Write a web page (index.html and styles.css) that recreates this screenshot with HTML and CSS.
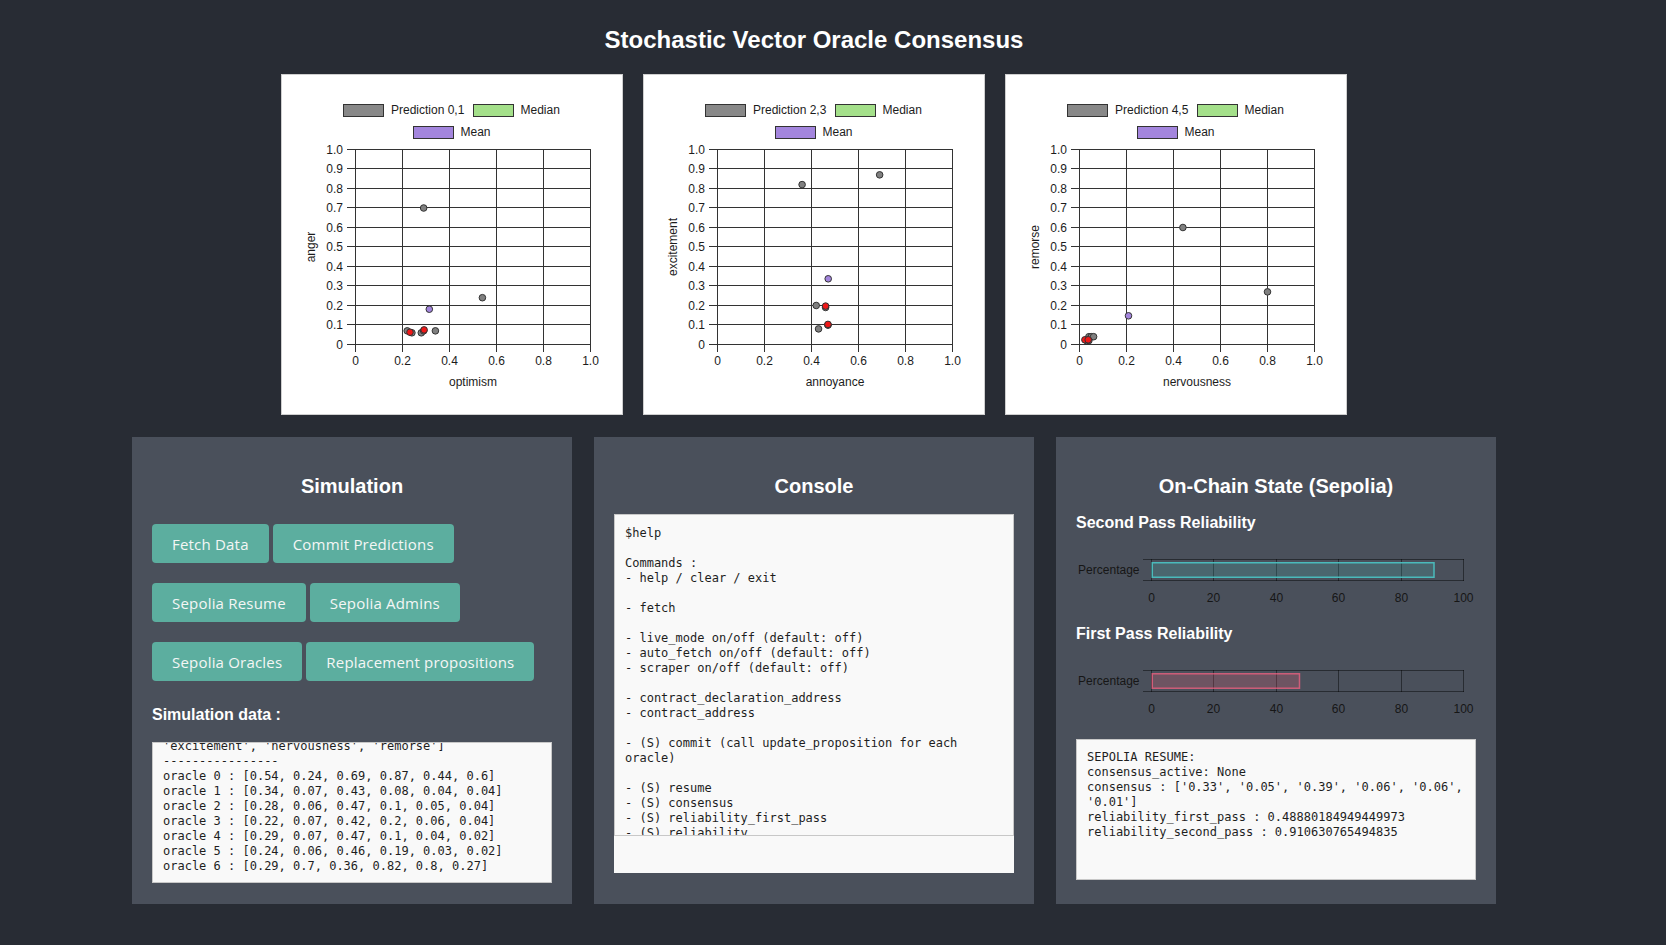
FILE: index.html
```html
<!DOCTYPE html>
<html lang="en">
<head>
<meta charset="utf-8">
<title>Stochastic Vector Oracle Consensus</title>
<link rel="stylesheet" href="styles.css">
</head>
<body>
<div class="app">
  <h1 class="title">Stochastic Vector Oracle Consensus</h1>

  <div class="charts">
    <div class="chart-card">
      <svg class="scatter" width="340" height="339" viewBox="1 1 340 339">
        <rect class="sw sw-pred" x="62.5" y="30.5" width="40" height="12"/>
        <text x="110" y="40">Prediction 0,1</text>
        <rect class="sw sw-med" x="192.5" y="30.5" width="40" height="12"/>
        <text x="239.5" y="40">Median</text>
        <rect class="sw sw-mean" x="132.5" y="52.5" width="40" height="12"/>
        <text x="179.5" y="62">Mean</text>
        <path class="grid" d="M66 75.5H310M66 94.5H310M66 114.5H310M66 133.5H310M66 153.5H310M66 172.5H310M66 192.5H310M66 211.5H310M66 231.5H310M66 250.5H310M66 270.5H310M74.5 75V278M121.5 75V278M168.5 75V278M215.5 75V278M262.5 75V278M309.5 75V278"/>
        <g class="yt">
          <text x="62" y="274.5">0</text><text x="62" y="254.5">0.1</text><text x="62" y="235.5">0.2</text><text x="62" y="215.5">0.3</text><text x="62" y="196.5">0.4</text><text x="62" y="176.5">0.5</text><text x="62" y="157.5">0.6</text><text x="62" y="137.5">0.7</text><text x="62" y="118.5">0.8</text><text x="62" y="98.5">0.9</text><text x="62" y="79.5">1.0</text>
        </g>
        <g class="xt">
          <text x="74.5" y="291">0</text><text x="121.5" y="291">0.2</text><text x="168.5" y="291">0.4</text><text x="215.5" y="291">0.6</text><text x="262.5" y="291">0.8</text><text x="309.5" y="291">1.0</text>
        </g>
        <text class="axis-title" x="192" y="312">optimism</text>
        <text class="axis-title" transform="rotate(-90)" x="-173" y="33.5">anger</text>
        <g class="pts">
          <circle class="p" cx="201.4" cy="223.7" r="3.3"/><circle class="p" cx="154.4" cy="256.85" r="3.3"/><circle class="p" cx="140.3" cy="258.8" r="3.3"/><circle class="p" cx="126.2" cy="256.85" r="3.3"/><circle class="p" cx="142.65" cy="256.85" r="3.3"/><circle class="p" cx="130.9" cy="258.8" r="3.3"/><circle class="p" cx="142.65" cy="134" r="3.3"/>
          <circle class="m" cx="129" cy="258.2" r="3.3"/><circle class="m" cx="143.1" cy="255.9" r="3.3"/>
          <circle class="a" cx="148.3" cy="235.2" r="3.3"/>
        </g>
      </svg>
    </div>

    <div class="chart-card">
      <svg class="scatter" width="340" height="339" viewBox="1 1 340 339">
        <rect class="sw sw-pred" x="62.5" y="30.5" width="40" height="12"/>
        <text x="110" y="40">Prediction 2,3</text>
        <rect class="sw sw-med" x="192.5" y="30.5" width="40" height="12"/>
        <text x="239.5" y="40">Median</text>
        <rect class="sw sw-mean" x="132.5" y="52.5" width="40" height="12"/>
        <text x="179.5" y="62">Mean</text>
        <path class="grid" d="M66 75.5H310M66 94.5H310M66 114.5H310M66 133.5H310M66 153.5H310M66 172.5H310M66 192.5H310M66 211.5H310M66 231.5H310M66 250.5H310M66 270.5H310M74.5 75V278M121.5 75V278M168.5 75V278M215.5 75V278M262.5 75V278M309.5 75V278"/>
        <g class="yt">
          <text x="62" y="274.5">0</text><text x="62" y="254.5">0.1</text><text x="62" y="235.5">0.2</text><text x="62" y="215.5">0.3</text><text x="62" y="196.5">0.4</text><text x="62" y="176.5">0.5</text><text x="62" y="157.5">0.6</text><text x="62" y="137.5">0.7</text><text x="62" y="118.5">0.8</text><text x="62" y="98.5">0.9</text><text x="62" y="79.5">1.0</text>
        </g>
        <g class="xt">
          <text x="74.5" y="291">0</text><text x="121.5" y="291">0.2</text><text x="168.5" y="291">0.4</text><text x="215.5" y="291">0.6</text><text x="262.5" y="291">0.8</text><text x="309.5" y="291">1.0</text>
        </g>
        <text class="axis-title" x="192" y="312">annoyance</text>
        <text class="axis-title" transform="rotate(-90)" x="-173" y="33.5">excitement</text>
        <g class="pts">
          <circle class="p" cx="236.65" cy="100.85" r="3.3"/><circle class="p" cx="175.55" cy="254.9" r="3.3"/><circle class="p" cx="184.95" cy="251" r="3.3"/><circle class="p" cx="173.2" cy="231.5" r="3.3"/><circle class="p" cx="184.95" cy="251" r="3.3"/><circle class="p" cx="182.6" cy="233.45" r="3.3"/><circle class="p" cx="159.1" cy="110.6" r="3.3"/>
          <circle class="m" cx="182.6" cy="232.1" r="3.3"/><circle class="m" cx="184.95" cy="250.4" r="3.3"/>
          <circle class="a" cx="185.2" cy="204.8" r="3.3"/>
        </g>
      </svg>
    </div>

    <div class="chart-card">
      <svg class="scatter" width="340" height="339" viewBox="1 1 340 339">
        <rect class="sw sw-pred" x="62.5" y="30.5" width="40" height="12"/>
        <text x="110" y="40">Prediction 4,5</text>
        <rect class="sw sw-med" x="192.5" y="30.5" width="40" height="12"/>
        <text x="239.5" y="40">Median</text>
        <rect class="sw sw-mean" x="132.5" y="52.5" width="40" height="12"/>
        <text x="179.5" y="62">Mean</text>
        <path class="grid" d="M66 75.5H310M66 94.5H310M66 114.5H310M66 133.5H310M66 153.5H310M66 172.5H310M66 192.5H310M66 211.5H310M66 231.5H310M66 250.5H310M66 270.5H310M74.5 75V278M121.5 75V278M168.5 75V278M215.5 75V278M262.5 75V278M309.5 75V278"/>
        <g class="yt">
          <text x="62" y="274.5">0</text><text x="62" y="254.5">0.1</text><text x="62" y="235.5">0.2</text><text x="62" y="215.5">0.3</text><text x="62" y="196.5">0.4</text><text x="62" y="176.5">0.5</text><text x="62" y="157.5">0.6</text><text x="62" y="137.5">0.7</text><text x="62" y="118.5">0.8</text><text x="62" y="98.5">0.9</text><text x="62" y="79.5">1.0</text>
        </g>
        <g class="xt">
          <text x="74.5" y="291">0</text><text x="121.5" y="291">0.2</text><text x="168.5" y="291">0.4</text><text x="215.5" y="291">0.6</text><text x="262.5" y="291">0.8</text><text x="309.5" y="291">1.0</text>
        </g>
        <text class="axis-title" x="192" y="312">nervousness</text>
        <text class="axis-title" transform="rotate(-90)" x="-173" y="33.5">remorse</text>
        <g class="pts">
          <circle class="p" cx="177.9" cy="153.5" r="3.3"/><circle class="p" cx="83.9" cy="262.7" r="3.3"/><circle class="p" cx="86.25" cy="262.7" r="3.3"/><circle class="p" cx="88.6" cy="262.7" r="3.3"/><circle class="p" cx="83.9" cy="266.6" r="3.3"/><circle class="p" cx="81.55" cy="266.6" r="3.3"/><circle class="p" cx="262.5" cy="217.85" r="3.3"/>
          <circle class="m" cx="79.9" cy="265.8" r="3.3"/><circle class="m" cx="83.2" cy="265.8" r="3.3"/>
          <circle class="a" cx="123.5" cy="241.8" r="3.3"/>
        </g>
      </svg>
    </div>
  </div>

  <div class="panels">
    <section class="panel">
      <h2 class="panel-title">Simulation</h2>
      <div class="btn-rows">
        <div class="btn-row"><button class="btn">Fetch Data</button><button class="btn">Commit Predictions</button></div>
        <div class="btn-row"><button class="btn">Sepolia Resume</button><button class="btn">Sepolia Admins</button></div>
        <div class="btn-row"><button class="btn">Sepolia Oracles</button><button class="btn">Replacement propositions</button></div>
      </div>
      <h3 class="label label-sim">Simulation data :</h3>
      <div class="data-box scroll-end"><div class="data-lines">labels : ['optimism', 'anger', 'annoyance', 'excitement', 'nervousness', 'remorse']
----------------
oracle 0 : [0.54, 0.24, 0.69, 0.87, 0.44, 0.6]
oracle 1 : [0.34, 0.07, 0.43, 0.08, 0.04, 0.04]
oracle 2 : [0.28, 0.06, 0.47, 0.1, 0.05, 0.04]
oracle 3 : [0.22, 0.07, 0.42, 0.2, 0.06, 0.04]
oracle 4 : [0.29, 0.07, 0.47, 0.1, 0.04, 0.02]
oracle 5 : [0.24, 0.06, 0.46, 0.19, 0.03, 0.02]
oracle 6 : [0.29, 0.7, 0.36, 0.82, 0.8, 0.27]</div></div>
    </section>

    <section class="panel">
      <h2 class="panel-title">Console</h2>
      <div class="console">
        <pre class="console-out">$help

Commands :
- help / clear / exit

- fetch

- live_mode on/off (default: off)
- auto_fetch on/off (default: off)
- scraper on/off (default: off)

- contract_declaration_address
- contract_address

- (S) commit (call update_proposition for each oracle)

- (S) resume
- (S) consensus
- (S) reliability_first_pass
- (S) reliability
- (S) oracles
- (S) admins</pre>
        <input class="console-in" type="text" aria-label="console input">
      </div>
    </section>

    <section class="panel">
      <h2 class="panel-title">On-Chain State (Sepolia)</h2>
      <h3 class="label">Second Pass Reliability</h3>
      <svg class="bar" width="400" height="93" viewBox="0 0 400 93">
        <path class="bar-grid" d="M67 27.5H388M67 48.5H388M75.5 27V49M137.5 27V49M200.5 27V49M262.5 27V49M325.5 27V49M387.5 27V49"/>
        <rect class="bar-teal" x="76.25" y="30.75" width="281.75" height="14.5"/>
        <text class="bar-ylabel" x="63.5" y="41.5">Percentage</text>
        <g class="bar-ticks">
          <text x="75.5" y="70">0</text><text x="137.5" y="70">20</text><text x="200.5" y="70">40</text><text x="262.5" y="70">60</text><text x="325.5" y="70">80</text><text x="387.5" y="70">100</text>
        </g>
      </svg>
      <h3 class="label">First Pass Reliability</h3>
      <svg class="bar" width="400" height="93" viewBox="0 0 400 93">
        <path class="bar-grid" d="M67 27.5H388M67 48.5H388M75.5 27V49M137.5 27V49M200.5 27V49M262.5 27V49M325.5 27V49M387.5 27V49"/>
        <rect class="bar-pink" x="76.25" y="30.75" width="147.25" height="14.5"/>
        <text class="bar-ylabel" x="63.5" y="41.5">Percentage</text>
        <g class="bar-ticks">
          <text x="75.5" y="70">0</text><text x="137.5" y="70">20</text><text x="200.5" y="70">40</text><text x="262.5" y="70">60</text><text x="325.5" y="70">80</text><text x="387.5" y="70">100</text>
        </g>
      </svg>
      <pre class="data-box resume">SEPOLIA RESUME:
consensus_active: None
consensus : ['0.33', '0.05', '0.39', '0.06', '0.06', '0.01']
reliability_first_pass : 0.48880184949449973
reliability_second_pass : 0.910630765494835</pre>
    </section>
  </div>
</div>
</body>
</html>
```

FILE: styles.css
```css
html, body {
  margin: 0;
  background: #282c34;
}

body {
  font-family: "Liberation Sans", Arial, sans-serif;
  color: #ffffff;
  min-height: 100vh;
}

.app {
  width: 1628px;
  display: flex;
  flex-direction: column;
  align-items: center;
}

.title {
  font-size: 24px;
  line-height: 28px;
  font-weight: bold;
  margin: 26px 0 20px;
}

/* ---------- scatter charts ---------- */
.charts {
  display: flex;
  gap: 20px;
}

.chart-card {
  width: 342px;
  height: 341px;
  box-sizing: border-box;
  border: 1px solid #cfcfcf;
  background: #ffffff;
}

.chart-card svg {
  display: block;
}

.scatter text {
  font-family: "Liberation Sans", Arial, sans-serif;
  font-size: 12px;
  fill: #1c1c1c;
}

.scatter .yt text {
  text-anchor: end;
}

.scatter .xt text,
.scatter .axis-title {
  text-anchor: middle;
}

.grid {
  fill: none;
  stroke: #333333;
  stroke-width: 1;
}

.sw {
  stroke: #333333;
  stroke-width: 1;
}

.sw-pred { fill: #888888; }
.sw-med { fill: #a4e08a; }
.sw-mean { fill: #a385dd; }

.pts circle {
  stroke: #333333;
  stroke-width: 1;
}

.pts .p { fill: #808080; }
.pts .m { fill: #f01818; }
.pts .a { fill: #a385dd; }

/* ---------- panels ---------- */
.panels {
  display: flex;
  gap: 22px;
  margin-top: 22px;
}

.panel {
  width: 440px;
  height: 467px;
  box-sizing: border-box;
  padding: 20px;
  background: #4a505b;
  display: flex;
  flex-direction: column;
}

.panel-title {
  font-size: 20px;
  line-height: 23px;
  font-weight: bold;
  text-align: center;
  margin: 18px 0 16px;
}

.btn-rows {
  display: flex;
  flex-direction: column;
  gap: 20px;
  margin-top: 10px;
}

.btn-row {
  display: flex;
  gap: 4px;
}

.btn {
  height: 39px;
  padding: 0 20px;
  border: 0;
  border-radius: 4px;
  background: #5cae9f;
  color: #f4f6f5;
  font-family: "Open Sans", "Noto Sans", sans-serif;
  font-size: 15px;
  letter-spacing: 0.2px;
  cursor: pointer;
}

.label {
  font-size: 16px;
  line-height: 18px;
  font-weight: bold;
  margin: 0;
}

.label-sim {
  margin: 25px 0 18px;
}

.data-box {
  width: 400px;
  height: 141px;
  box-sizing: border-box;
  margin: 0;
  padding: 10px;
  border: 1px solid #c8c8c8;
  background: #f9f9f9;
  color: #1e1e1e;
  font-family: "DejaVu Sans Mono", "Liberation Mono", monospace;
  font-size: 12px;
  line-height: 15px;
  white-space: pre-wrap;
  overflow: hidden;
}

.scroll-end {
  display: flex;
  flex-direction: column;
  justify-content: flex-end;
  padding-bottom: 8px;
}

.data-lines {
  flex: none;
}

.resume {
  margin-top: 3px;
}

/* ---------- console ---------- */
.console {
  width: 400px;
  display: flex;
  flex-direction: column;
}

.console-out {
  height: 322px;
  box-sizing: border-box;
  margin: 0;
  padding: 11px 10px 10px;
  border: 1px solid #c8c8c8;
  background: #f9f9f9;
  color: #1e1e1e;
  font-family: "DejaVu Sans Mono", "Liberation Mono", monospace;
  font-size: 12px;
  line-height: 15px;
  white-space: pre-wrap;
  overflow: hidden;
}

.console-in {
  height: 37px;
  box-sizing: border-box;
  margin: 0;
  padding: 0 10px;
  border: 0;
  outline: none;
  background: #f9f9f9;
  font-family: "DejaVu Sans Mono", monospace;
  font-size: 12px;
}

/* ---------- bar charts ---------- */
.bar {
  display: block;
}

.bar text {
  font-family: "Liberation Sans", Arial, sans-serif;
  font-size: 12px;
  fill: #161616;
}

.bar-ylabel {
  text-anchor: end;
}

.bar-ticks text {
  text-anchor: middle;
}

.bar-grid {
  fill: none;
  stroke: rgba(0, 0, 0, 0.45);
  stroke-width: 1;
}

.bar-teal {
  fill: rgba(75, 192, 192, 0.2);
  stroke: rgba(75, 192, 192, 0.95);
  stroke-width: 1.5;
}

.bar-pink {
  fill: rgba(255, 99, 132, 0.2);
  stroke: rgba(255, 99, 132, 0.7);
  stroke-width: 1.5;
}
```
